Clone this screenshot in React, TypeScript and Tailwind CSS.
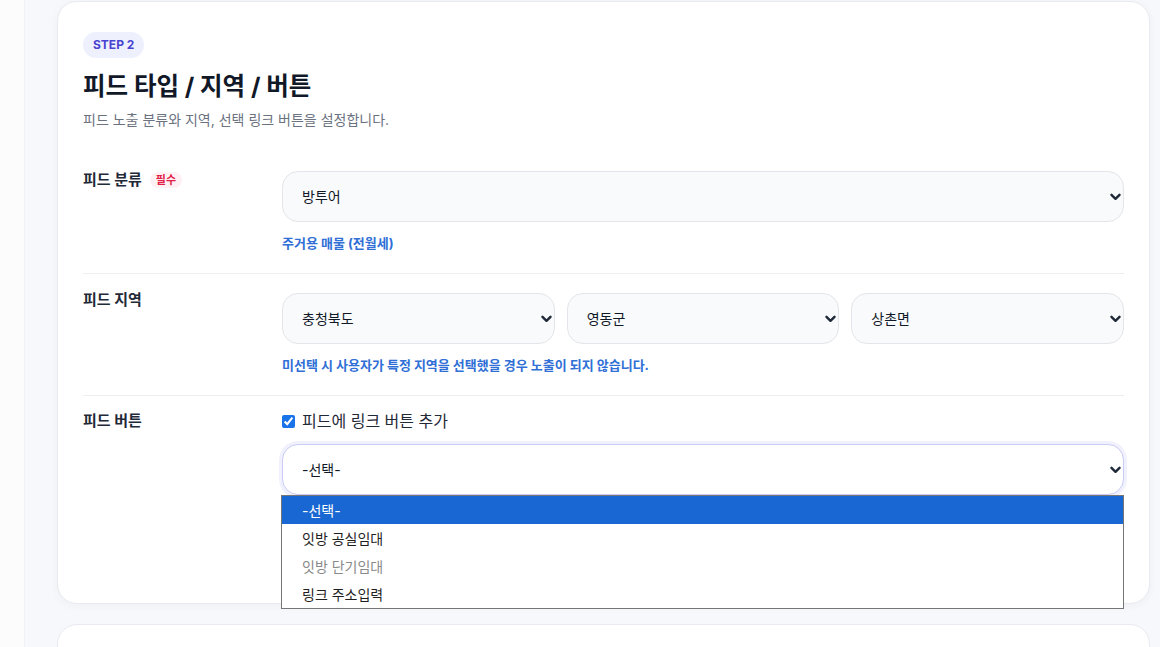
import React from 'react';

const font = { fontFamily: '"Inter", "Noto Sans CJK KR", "Noto Sans", sans-serif' };

function Chevron() {
  return (
    <svg
      className="pointer-events-none absolute right-[3px] top-1/2 -translate-y-1/2"
      width="11"
      height="8"
      viewBox="0 0 11 8"
      fill="none"
    >
      <path d="M1.5 1.8 L5.5 5.8 L9.5 1.8" stroke="#1f2937" strokeWidth="2.4" strokeLinecap="round" strokeLinejoin="round" />
    </svg>
  );
}

function FakeSelect({ value, focused = false, children }: { value: string; focused?: boolean; children?: React.ReactNode }) {
  return (
    <div className="relative w-full">
      <div
        className={
          focused
            ? 'flex h-[51px] items-center rounded-[16px] border border-[#c9ccf4] bg-white pl-[19px] text-[14px] text-[#111827] shadow-[0_0_0_3px_#f0f1fd]'
            : 'flex h-[51px] items-center rounded-[16px] border border-[#e3e5ea] bg-[#f9fafc] pl-[19px] text-[14px] text-[#111827]'
        }
      >
        {value}
      </div>
      <Chevron />
      {children}
    </div>
  );
}

const options = [
  { label: '-선택-', selected: true },
  { label: '잇방 공실임대' },
  { label: '잇방 단기임대', disabled: true },
  { label: '링크 주소입력' },
];

export default function App() {
  return (
    <div className="flex min-h-[647px] bg-[#fcfcfd]" style={font}>
      <div className="w-6 shrink-0 bg-[#fcfcfd]" />
      <main className="flex-1 border-l border-[#f0f1f4] bg-[#f7f8fb] pl-[32px] pr-[10px] pt-px">
        {/* step card */}
        <section className="relative rounded-[20px] border border-[#e9eaf0] bg-white px-[25px] pb-[108px] pt-[29px] shadow-[0_2px_10px_rgba(30,40,90,0.04)]">
          <span className="inline-flex h-[26px] items-center rounded-full bg-[#eef0fe] px-[10px] text-[12px] font-bold text-[#4a44d1]">
            STEP 2
          </span>
          <h2 className="mt-[12px] text-[24.5px] font-bold leading-[32px] text-[#111827]">피드 타입 / 지역 / 버튼</h2>
          <p className="mt-[8px] text-[14px] leading-[20px] text-[#6b7280]">
            피드 노출 분류와 지역, 선택 링크 버튼을 설정합니다.
          </p>

          <div className="mt-[21px]">
            {/* 피드 분류 */}
            <div className="flex border-b border-[#eceef2] pb-[22px] pt-[20px]">
              <div className="-mt-px flex w-[199px] shrink-0 items-center gap-[8px] self-start">
                <span className="text-[15px] font-bold leading-[20px] text-[#1f2937]">피드 분류</span>
                <span className="rounded-full bg-[#fff1f3] px-[6px] text-[11px] font-bold leading-[16px] text-[#e11d48]">필수</span>
              </div>
              <div className="flex-1">
                <FakeSelect value="방투어" />
                <p className="mt-[13px] text-[13px] font-bold leading-[16px] text-[#2f6fd6]">주거용 매물 (전월세)</p>
              </div>
            </div>

            {/* 피드 지역 */}
            <div className="flex border-b border-[#eceef2] pb-[22px] pt-[19px]">
              <div className="-mt-[3px] w-[199px] shrink-0 text-[15px] font-bold leading-[20px] text-[#1f2937]">피드 지역</div>
              <div className="flex-1">
                <div className="grid grid-cols-3 gap-[12px]">
                  <FakeSelect value="충청북도" />
                  <FakeSelect value="영동군" />
                  <FakeSelect value="상촌면" />
                </div>
                <p className="mt-[13px] text-[13px] font-bold leading-[16px] text-[#2f6fd6]">
                  미선택 시 사용자가 특정 지역을 선택했을 경우 노출이 되지 않습니다.
                </p>
              </div>
            </div>

            {/* 피드 버튼 */}
            <div className="flex pt-[14px]">
              <div className="w-[199px] shrink-0 text-[15px] font-bold leading-[22px] text-[#1f2937]">피드 버튼</div>
              <div className="flex-1">
                <label className="flex h-[22px] items-center gap-[7px] text-[16px] text-[#1f2937]">
                  <input type="checkbox" checked readOnly className="m-0 h-[13px] w-[13px] accent-[#1a73e8]" />
                  피드에 링크 버튼 추가
                </label>
                <div className="mt-[12px]">
                  <FakeSelect value="-선택-" focused>
                    <ul className="absolute left-[-1px] right-0 top-full z-10 border border-[#767676] bg-white text-[14px]">
                      {options.map((o) => (
                        <li
                          key={o.label}
                          className={
                            o.selected
                              ? 'flex h-[28px] items-center bg-[#1967d2] pl-[20px] text-white'
                              : o.disabled
                              ? 'flex h-[28px] items-center pl-[20px] text-[#8a8a8a]'
                              : 'flex h-[28px] items-center pl-[20px] text-[#1f1f1f]'
                          }
                        >
                          {o.label}
                        </li>
                      ))}
                    </ul>
                  </FakeSelect>
                </div>
              </div>
            </div>
          </div>
        </section>

        {/* next card */}
        <section className="mt-[20px] h-[120px] rounded-[20px] border border-[#e9eaf0] bg-white" />
      </main>
    </div>
  );
}
